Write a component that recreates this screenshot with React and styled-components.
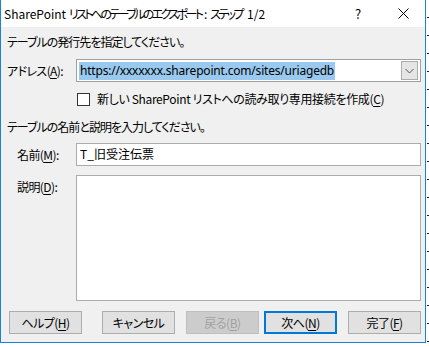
import React from "react";
import styled, { createGlobalStyle } from "styled-components";

const Global = createGlobalStyle`
  html, body { margin: 0; padding: 0; background: #ffffff; }
  body {
    font-family: "Noto Sans CJK JP", "Noto Sans", sans-serif;
    font-size: 12px;
    line-height: 16px;
    color: #000;
    font-feature-settings: "palt";
  }
`;

const Stage = styled.div`
  width: 429px;
  height: 347px;
  overflow: hidden;
  background:
    repeating-linear-gradient(to bottom, transparent 0 17px, #222 17px 18px) right top / 2px 100% no-repeat,
    #ffffff;
`;

const Dialog = styled.div`
  box-sizing: border-box;
  width: 426px;
  height: 343px;
  border: 1px solid #1883d7;
  border-top: none;
  display: flex;
  flex-direction: column;
  background: #f0f0f0;
`;

const TitleBar = styled.div`
  height: 27px;
  flex: none;
  background: #ffffff;
  display: flex;
  align-items: center;
  padding-left: 3px;
`;

const Title = styled.div`
  flex: 1;
  white-space: nowrap;
`;

const TitleBtn = styled.div`
  width: ${(p) => p.$w}px;
  height: 27px;
  display: flex;
  align-items: center;
  justify-content: center;
  font-size: 13px;
`;

const K = styled.span`
  letter-spacing: ${(p) => p.$ls}px;
  padding-right: ${(p) => -p.$ls}px;
`;

const Body = styled.div`
  flex: 1;
  display: flex;
  flex-direction: column;
  padding: 7px 4px 0 6px;
`;

const Text = styled.div`
  height: 16px;
  margin-top: ${(p) => p.$mt || 0}px;
  white-space: nowrap;
  letter-spacing: ${(p) => p.$ls || 0}px;
`;

const Row = styled.div`
  display: flex;
  align-items: ${(p) => p.$align || "center"};
  margin-top: ${(p) => p.$mt}px;
  white-space: nowrap;
`;

const Label = styled.div`
  width: ${(p) => (p.$indent ? 59 : 69)}px;
  padding-left: ${(p) => (p.$indent ? 10 : 0)}px;
  white-space: nowrap;
  margin-top: ${(p) => p.$mt || 0}px;
  letter-spacing: -0.6px;
`;

const U = styled.span`
  text-decoration: underline;
  text-underline-offset: 2px;
`;

const Combo = styled.div`
  box-sizing: border-box;
  width: 345px;
  height: 23px;
  background: #fff;
  border: 1px solid #a0a0a0;
  display: flex;
  align-items: center;
  padding: 0 2px;
`;

const Selected = styled.span`
  flex: 1;
  display: flex;
`;

const Sel = styled.span`
  background: #99c9ef;
  line-height: 18px;
  padding: 0 1px;
  font-family: "Noto Sans", sans-serif;
  font-size: 12px;
  letter-spacing: -0.2px;
`;

const DropBtn = styled.div`
  box-sizing: border-box;
  width: 17px;
  height: 19px;
  background: #e5e5e5;
  border: 1px solid #acacac;
  display: flex;
  align-items: center;
  justify-content: center;
`;

const Check = styled.div`
  box-sizing: border-box;
  width: 13px;
  height: 13px;
  border: 1px solid #333;
  background: #fff;
  margin-left: 70px;
  margin-right: 7px;
`;

const CheckText = styled.span`
  letter-spacing: -0.35px;
`;

const Input = styled.div`
  box-sizing: border-box;
  width: 345px;
  height: ${(p) => p.$h}px;
  background: #fff;
  border: 1px solid #ababab;
  padding: 2px 3px;
`;

const Buttons = styled.div`
  display: flex;
  margin-top: 10px;
  padding-left: 1px;
`;

const Btn = styled.div`
  box-sizing: border-box;
  width: 73px;
  height: 23px;
  margin-left: ${(p) => p.$ml}px;
  display: flex;
  align-items: center;
  justify-content: center;
  background: ${(p) => (p.$disabled ? "#cccccc" : "#e1e1e1")};
  border: ${(p) => (p.$default ? "2px solid #0078d7" : p.$disabled ? "1px solid #bfbfbf" : "1px solid #adadad")};
  color: ${(p) => (p.$disabled ? "#a3a3a3" : "#000")};
  white-space: nowrap;
  letter-spacing: -0.5px;
`;

export default function App() {
  return (
    <>
      <Global />
      <Stage>
        <Dialog>
          <TitleBar>
            <Title>
              SharePoint <K $ls={-2.6}>リストへのテーブルのエクスポート</K>: <K $ls={-2.6}>ステップ</K> 1/2
            </Title>
            <TitleBtn $w={46}>?</TitleBtn>
            <TitleBtn $w={44}>
              <svg width="11" height="11" viewBox="0 0 11 11">
                <path d="M0.5 0.5 L10.5 10.5 M10.5 0.5 L0.5 10.5" stroke="#000" strokeWidth="1" fill="none" />
              </svg>
            </TitleBtn>
          </TitleBar>
          <Body>
            <Text $ls={-1}>テーブルの発行先を指定してください。</Text>
            <Row $mt={9}>
              <Label>アドレス(<U>A</U>):</Label>
              <Combo>
                <Selected>
                  <Sel>https://xxxxxxx.sharepoint.com/sites/uriagedb</Sel>
                </Selected>
                <DropBtn>
                  <svg width="9" height="6" viewBox="0 0 9 6">
                    <path d="M0.5 1 L4.5 5 L8.5 1" stroke="#555" strokeWidth="1" fill="none" />
                  </svg>
                </DropBtn>
              </Combo>
            </Row>
            <Row $mt={9}>
              <Check />
              <CheckText>新しい SharePoint リストへの読み取り専用接続を作成(<U>C</U>)</CheckText>
            </Row>
            <Text $mt={12} $ls={-1}>テーブルの名前と説明を入力してください。</Text>
            <Row $mt={8}>
              <Label $indent>名前(<U>M</U>):</Label>
              <Input $h={23}>T_旧受注伝票</Input>
            </Row>
            <Row $mt={9} $align="flex-start">
              <Label $indent $mt={4}>説明(<U>D</U>):</Label>
              <Input $h={126} />
            </Row>
            <Buttons>
              <Btn $ml={1}>ヘルプ(<U>H</U>)</Btn>
              <Btn $ml={20}>キャンセル</Btn>
              <Btn $ml={11} $disabled>戻る(<U>B</U>)</Btn>
              <Btn $ml={5} $default>次へ(<U>N</U>)</Btn>
              <Btn $ml={11}>完了(<U>F</U>)</Btn>
            </Buttons>
          </Body>
        </Dialog>
      </Stage>
    </>
  );
}
